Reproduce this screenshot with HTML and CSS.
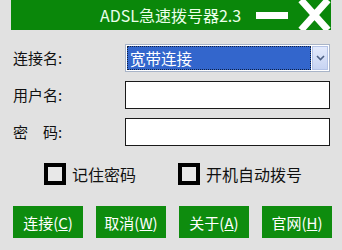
FILE: index.html
```html
<!DOCTYPE html>
<html lang="zh-CN">
<head>
  <meta charset="UTF-8">
  <meta name="viewport" content="width=device-width, initial-scale=1.0">
  <title>ADSL急速拨号器2.3</title>
  <link rel="stylesheet" href="styles.css">
</head>
<body>
  <div class="titlebar">
    <span class="title">ADSL急速拨号器2.3</span>
    <span class="min"></span>
    <svg class="close" width="33" height="30" viewBox="0 0 33 30">
      <path d="M3 0 L30 30 M30 0 L3 30" stroke="#ffffff" stroke-width="7" fill="none"/>
    </svg>
  </div>

  <div class="form">
    <label>连接名:</label>
    <div class="combo">
      <div class="combo-value"><span>宽带连接</span></div>
      <div class="combo-btn">
        <svg width="9" height="6" viewBox="0 0 9 6"><path d="M1 1 L4.5 4.5 L8 1" stroke="#4d6185" stroke-width="1.6" fill="none"/></svg>
      </div>
    </div>

    <label>用户名:</label>
    <div class="field"></div>

    <label>密　码:</label>
    <div class="field"></div>
  </div>

  <div class="checks">
    <div class="check"><span class="box"></span>记住密码</div>
    <div class="check"><span class="box"></span>开机自动拨号</div>
  </div>

  <div class="buttons">
    <button>连接(<u>C</u>)</button>
    <button>取消(<u>W</u>)</button>
    <button>关于(<u>A</u>)</button>
    <button>官网(<u>H</u>)</button>
  </div>
</body>
</html>
```

FILE: styles.css
```css
body { margin: 0; background: #e1e1e1; font-family: "Noto Sans CJK SC", "Liberation Sans", sans-serif; color: #111; width: 342px; height: 250px; overflow: hidden; }

.titlebar { margin: 0 11px; height: 30px; background: #0a870a; display: flex; align-items: center; }
.title { width: 145px; margin-left: 89px; flex-shrink: 0; white-space: nowrap; font-size: 16px; color: #eaffea; line-height: 30px; }
.min { margin-left: 11px; flex-shrink: 0; width: 32px; height: 7px; background: #ffffff; }
.close { margin-left: 10px; flex-shrink: 0; display: block; }

.form { display: grid; grid-template-columns: 112px 205px; row-gap: 9px; padding: 14px 0 0 13px; align-items: center; }
.form label { font-size: 15px; line-height: 28px; }
.field { height: 26px; background: #ffffff; border: 1px solid #1a1a1a; }

.combo { border: 1px solid #a8b4c8; background: #ffffff; display: flex; padding: 1px; box-sizing: border-box; height: 28px; }
.combo-value { flex: 1; background: #3366cc; border: 1px dotted #102040; display: flex; align-items: center; }
.combo-value span { color: #ffffff; font-size: 15.5px; padding-left: 2px; }
.combo-btn { width: 16px; margin-left: 1px; background: linear-gradient(#e3eafc, #c7d4f2); border: 1px solid #b4c3e6; box-sizing: border-box; display: flex; align-items: center; justify-content: center; }

.checks { display: flex; padding: 17px 0 0 44px; }
.check { display: flex; align-items: center; font-size: 16px; line-height: 22px; }
.check:first-child { width: 134px; }
.box { width: 14px; height: 14px; border: 4px solid #000; background: #e8e8e8; margin-right: 6px; }

.buttons { display: flex; gap: 13px; padding: 21px 0 0 13px; }
.buttons button { width: 70px; height: 32px; background: #0e8c0e; color: #ffffff; border: none; font-family: inherit; font-size: 15px; padding: 0; }
```
